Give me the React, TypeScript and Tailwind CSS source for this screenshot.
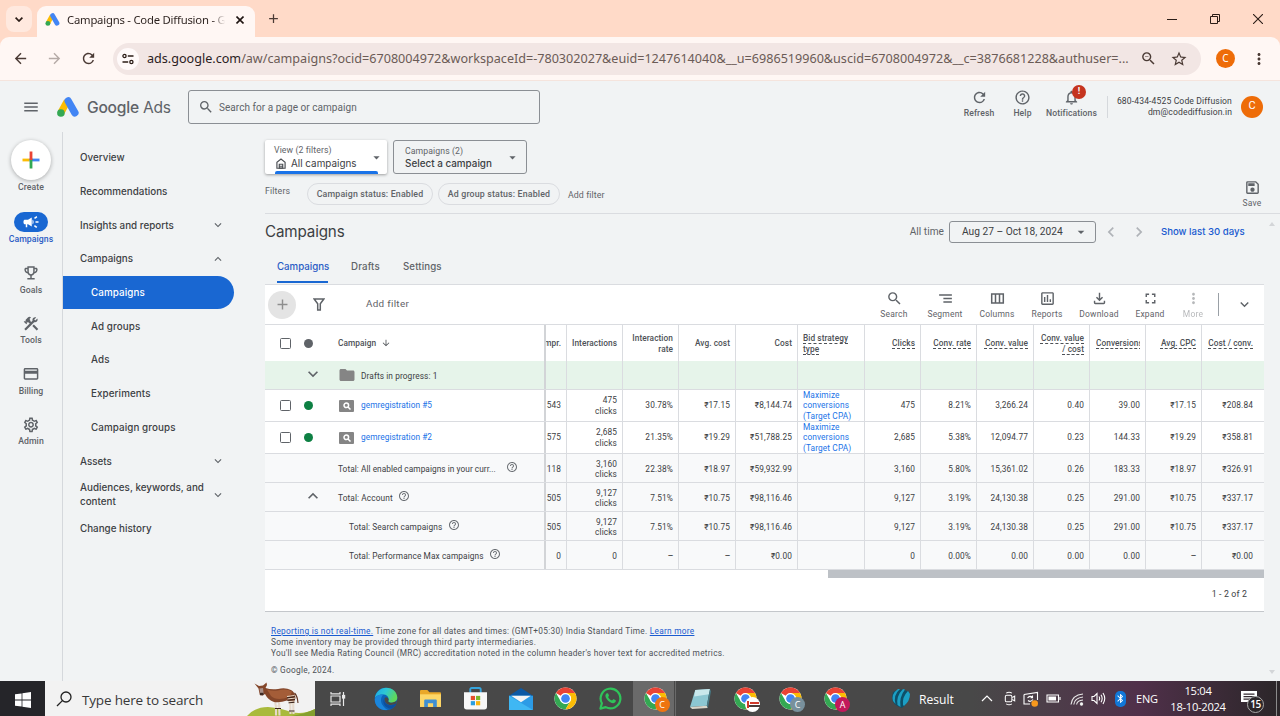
import React from "react";
import {
  MdMenu, MdSearch, MdRefresh, MdHelpOutline, MdNotificationsNone, MdCampaign, MdOutlineEmojiEvents, MdConstruction,
  MdCreditCard, MdOutlineSettings, MdOutlineSave, MdSegment, MdOutlineInsertChart, MdOutlineFileDownload, MdFullscreen,
  MdMoreVert, MdFolder, MdKeyboardArrowDown, MdKeyboardArrowUp, MdStarBorder, MdZoomOut, MdArrowBack,
  MdArrowForward, MdArrowDropDown, MdAdd, MdArrowDownward, MdChevronLeft, MdChevronRight, MdBluetooth,
} from "react-icons/md";

const AdsLogo = ({ className }: { className: string }) => (
  <svg viewBox="0 0 22 20" className={className}>
    <path d="M4 15.5 L10.2 4.2" stroke="#fbbc04" strokeWidth="7" />
    <path d="M11.2 4 L17.9 15.8" stroke="#4285f4" strokeWidth="7.4" strokeLinecap="round" />
    <circle cx="3.9" cy="16" r="3.8" fill="#34a853" />
  </svg>
);

const Chrome = ({ badge, tone }: { badge?: string; tone?: string }) => (
  <div className="relative h-[23px] w-[23px]">
    <svg viewBox="0 0 48 48" className="h-[23px] w-[23px]">
      <circle cx="24" cy="24" r="23" fill="#fff" />
      <path d="M4.1 12.5A23 23 0 0 1 43.9 12.5H24A11.5 11.5 0 0 0 14 18.2z" fill="#ea4335" />
      <path d="M4.1 12.5A23 23 0 0 0 24 47L34 29.8A11.5 11.5 0 0 1 14 29.8z" fill="#34a853" />
      <path d="M43.9 12.5A23 23 0 0 1 24 47L34 29.8A11.5 11.5 0 0 0 34 18.2L24 12.5z" fill="#fbbc05" />
      <circle cx="24" cy="24" r="11.4" fill="#fff" />
      <circle cx="24" cy="24" r="9" fill="#4285f4" />
    </svg>
    {badge !== undefined && (
      <span className={`absolute -right-[3px] -bottom-[2px] flex h-[15px] w-[15px] items-center justify-center rounded-full text-[9px] font-medium text-white ${tone}`}>{badge}</span>
    )}
  </div>
);

const BrowserChrome = () => (
  <div className="shrink-0 bg-[#ffdac8] font-['Noto_Sans','Open_Sans',sans-serif]">
    <div className="flex h-[37px] items-end">
      <div className="mb-[5px] ml-[6px] flex h-[26px] w-[26px] items-center justify-center rounded-[8px] bg-[#ffe9df]">
        <svg viewBox="0 0 8 5" className="h-[5px] w-[8px]" fill="none" stroke="#2b1d17" strokeWidth="1.7"><path d="M.6 .6L4 4L7.4 .6" /></svg>
      </div>
      <div className="ml-[5px] flex h-[31px] w-[218px] items-center rounded-t-[9px] bg-[#fff7f4] pb-[4px]">
        <AdsLogo className="ml-[8px] h-[13px] w-[15px]" />
        <div className="ml-[7px] h-[18px] w-[158px] overflow-hidden whitespace-nowrap bg-linear-to-r from-[#2b211e] from-92% to-transparent bg-clip-text text-[11.3px] leading-[18px] tracking-[-0.22px] text-transparent">Campaigns - Code Diffusion - Google Ads</div>
        <svg viewBox="0 0 8 8" className="ml-[11px] h-[8px] w-[8px]"><path d="M.5 .5L7.5 7.5M7.5 .5L.5 7.5" stroke="#1f1512" strokeWidth="1.6" /></svg>
      </div>
      <MdAdd className="mb-[11px] ml-[11px] h-[15px] w-[15px] text-[#4a3a34]" />
      <div className="mb-[13px] ml-auto flex items-center gap-[33px] pr-[17px] text-[#2b1d17]">
        <svg viewBox="0 0 10 10" className="h-[10px] w-[10px]"><path d="M0 5.5H10" stroke="currentColor" /></svg>
        <svg viewBox="0 0 10 10" className="h-[10px] w-[10px]" fill="none" stroke="currentColor"><path d="M.5 2.5H7.5V9.5H.5zM2.5 2.5V.5H9.5V7.5H7.5" /></svg>
        <svg viewBox="0 0 10 10" className="h-[10px] w-[10px]"><path d="M0 0L10 10M10 0L0 10" stroke="currentColor" strokeWidth="1.1" /></svg>
      </div>
    </div>
    <div className="flex h-[44px] items-center rounded-t-[9px] border-b border-[#f5e4dd] bg-[#fff7f4] text-[#4a3a34]">
      <MdArrowBack className="ml-[12px] h-[17px] w-[17px]" />
      <MdArrowForward className="ml-[17px] h-[17px] w-[17px] text-[#b5aaa6]" />
      <MdRefresh className="ml-[17px] h-[17px] w-[17px]" />
      <div className="ml-[16px] flex h-[32px] w-[1088px] shrink-0 items-center rounded-full bg-[#f2e6e4]">
        <div className="ml-[4px] flex h-[22px] w-[22px] items-center justify-center rounded-full bg-[#fffafa]">
          <svg viewBox="0 0 12 12" className="h-[12px] w-[12px]" fill="none" stroke="#2b1d17" strokeWidth="1.3">
            <circle cx="2.5" cy="3" r="1.6" /><path d="M5.8 3H11.5M.5 9H6.2" /><circle cx="9.4" cy="9" r="1.6" />
          </svg>
        </div>
        <div className="ml-[8px] w-[987px] pt-[2px] text-[12.6px] whitespace-nowrap text-[#6b5b56]"><span className="text-[#2b211e]">ads.google.com</span>/aw/campaigns?ocid=6708004972&amp;workspaceId=-780302027&amp;euid=1247614040&amp;__u=6986519960&amp;uscid=6708004972&amp;__c=3876681228&amp;authuser=...</div>
        <MdZoomOut className="ml-[6px] h-[17px] w-[17px] shrink-0" />
        <MdStarBorder className="ml-[13px] h-[18px] w-[18px] shrink-0" />
      </div>
      <div className="ml-[15px] flex h-[19px] w-[19px] items-center justify-center rounded-full bg-[#ee6c08] text-[10px] text-white">C</div>
      <MdMoreVert className="ml-[15px] h-[18px] w-[18px]" />
    </div>
  </div>
);

const HeaderAction = ({ icon, label, className }: { icon: React.ReactNode; label: string; className: string }) => (
  <div className={`relative flex flex-col items-center text-[#5f6368] ${className}`}>
    {icon}
    <span className="mt-[2px] text-[8.6px] leading-[11px] font-medium tracking-[0.12px]">{label}</span>
  </div>
);

const AdsHeader = () => (
  <div className="flex h-[51px] shrink-0 items-center">
    <MdMenu className="ml-[22px] h-[18px] w-[18px] text-[#5f6368]" />
    <AdsLogo className="ml-[17px] h-[20px] w-[22px]" />
    <div className="ml-[8px] w-[101px] pt-[2px] text-[15.6px] tracking-[-0.24px] whitespace-nowrap text-[#5f6368] font-['Inter',sans-serif]"><span className="font-medium">Google</span> Ads</div>
    <div className="flex h-[34px] w-[352px] items-center rounded-[3px] border border-[#8b8f94]">
      <MdSearch className="ml-[9px] h-[16px] w-[16px] text-[#5f6368]" />
      <span className="ml-[5px] pt-[1px] text-[10px] tracking-[0.05px] text-[#5f6368]">Search for a page or campaign</span>
    </div>
    <div className="ml-auto flex h-full items-start pt-[8px]">
      <HeaderAction icon={<MdRefresh className="h-[17px] w-[17px]" />} label="Refresh" className="w-[44px]" />
      <HeaderAction icon={<MdHelpOutline className="h-[17px] w-[17px]" />} label="Help" className="w-[43px]" />
      <HeaderAction
        icon={<><MdNotificationsNone className="h-[17px] w-[17px]" /><span className="absolute -top-[4px] left-[28px] flex h-[14px] w-[14px] items-center justify-center rounded-full bg-[#c5341f] text-[9px] font-bold text-white">!</span></>}
        label="Notifications" className="w-[55px]" />
    </div>
    <div className="ml-[8px] h-[22px] w-px bg-[#d5d8dc]" />
    <div className="ml-[7px] w-[117px] text-right text-[8.6px] leading-[11px] tracking-[0.12px] whitespace-nowrap text-[#3c4043]">680-434-4525 Code Diffusion<br />dm@codediffusion.in</div>
    <div className="mr-[17px] ml-[9px] flex h-[22px] w-[22px] items-center justify-center rounded-full bg-[#ee6c08] text-[11px] text-white">C</div>
  </div>
);

const railItems = [
  { label: "Goals", Icon: MdOutlineEmojiEvents },
  { label: "Tools", Icon: MdConstruction },
  { label: "Billing", Icon: MdCreditCard },
  { label: "Admin", Icon: MdOutlineSettings },
];

const Rail = () => (
  <div className="flex w-[62px] shrink-0 flex-col items-center pt-[8px] text-[8.7px] leading-[12px] font-medium tracking-[0.06px] text-[#5f6368]">
    <div className="flex h-[40px] w-[40px] items-center justify-center rounded-full bg-white shadow-[0_1px_4px_rgba(0,0,0,0.3)]">
      <svg viewBox="0 0 18 18" className="h-[18px] w-[18px]" strokeWidth="2.8">
        <path d="M.5 9H7.6" stroke="#fbbc04" /><path d="M7.6 9H17.5" stroke="#4285f4" /><path d="M9 7.6V17.5" stroke="#34a853" /><path d="M9 .5V9" stroke="#ea4335" />
      </svg>
    </div>
    <span className="mt-[1px]">Create</span>
    <div className="mt-[19px] flex h-[20px] w-[34px] items-center justify-center rounded-full bg-[#1967d2]">
      <MdCampaign className="h-[18px] w-[18px] text-white" />
    </div>
    <span className="mt-[1px] text-[#2a5bc4]">Campaigns</span>
    {railItems.map(({ label, Icon }) => (
      <div key={label} className="mt-[19px] flex h-[31.6px] flex-col items-center">
        <Icon className="h-[18px] w-[18px]" />
        <span className="mt-[2px]">{label}</span>
      </div>
    ))}
  </div>
);

const navItems: { label: string; chevron?: "up" | "down"; child?: boolean; active?: boolean }[] = [
  { label: "Overview" },
  { label: "Recommendations" },
  { label: "Insights and reports", chevron: "down" },
  { label: "Campaigns", chevron: "up" },
  { label: "Campaigns", child: true, active: true },
  { label: "Ad groups", child: true },
  { label: "Ads", child: true },
  { label: "Experiments", child: true },
  { label: "Campaign groups", child: true },
  { label: "Assets", chevron: "down" },
  { label: "Audiences, keywords, and content", chevron: "down" },
  { label: "Change history" },
];

const SideNav = () => (
  <div className="w-[203px] shrink-0 border-l border-[#d5d8dc] pt-[8.7px]">
    {navItems.map((n, i) => (
      <div key={i} className={`flex h-[33.72px] w-[171px] items-center justify-between pr-[9px] text-[9.8px] leading-[14px] font-medium font-['Inter',sans-serif] ${n.active ? "rounded-r-full bg-[#1967d2] text-white" : "text-[#3c4043]"} ${n.child ? "pl-[28px] tracking-[0.1px]" : "pl-[17px] tracking-[0.02px]"}`}>
        <span className="w-[132px] pt-[1.2px]">{n.label}</span>
        {n.chevron === "down" && <MdKeyboardArrowDown className="h-[14px] w-[14px] shrink-0 text-[#5f6368]" />}
        {n.chevron === "up" && <MdKeyboardArrowUp className="h-[14px] w-[14px] shrink-0 text-[#5f6368]" />}
      </div>
    ))}
  </div>
);

const Tool = ({ icon, label, className }: { icon: React.ReactNode; label: string; className: string }) => (
  <div className={`flex flex-col items-center text-[#5f6368] ${className}`}>
    {icon}
    <span className="mt-[2px] text-[8.5px] leading-[11px] tracking-[0.2px]">{label}</span>
  </div>
);

const Controls = () => (
  <>
    <div className="flex h-[34px] gap-[6px] font-['Inter',sans-serif]">
      <div className="relative flex w-[122px] items-center rounded-[2px] bg-white pl-[9px] shadow-[0_1px_3px_rgba(0,0,0,0.35)]">
        <div className="mt-[1px] flex-1">
          <div className="text-[8.7px] leading-[11px] tracking-[0.1px] text-[#5f6368] font-['Roboto',sans-serif]">View (2 filters)</div>
          <div className="flex items-center gap-[5px] text-[9.9px] leading-[14px] whitespace-nowrap text-[#3c4043]">
            <svg viewBox="0 0 11 12" className="ml-[2px] h-[11px] w-[10px] shrink-0" fill="none" stroke="#4d5156" strokeWidth="1.3"><path d="M1 11.2V4.7L5.5 1L10 4.7V11.2z" /><path d="M3.6 11V6.8H7.4V11zM4 9H7" /></svg>
            All campaigns
          </div>
        </div>
        <MdArrowDropDown className="mr-[3px] h-[15px] w-[15px] text-[#5f6368]" />
        <div className="absolute bottom-0 left-[10px] h-[3px] w-[103px] rounded-t-[2px] bg-[#1a73e8]" />
      </div>
      <div className="flex w-[134px] items-center rounded-[3px] border border-[#8b8f94] pl-[11px]">
        <div className="flex-1 pt-[2px]">
          <div className="text-[8.7px] leading-[11px] tracking-[0.1px] text-[#5f6368] font-['Roboto',sans-serif]">Campaigns (2)</div>
          <div className="text-[9.9px] leading-[13px] font-medium whitespace-nowrap text-[#3c4043]">Select a campaign</div>
        </div>
        <MdArrowDropDown className="mr-[6px] h-[15px] w-[15px] text-[#5f6368]" />
      </div>
    </div>
    <div className="mr-[-16px] flex h-[40px] items-start border-b border-[#dadce0] pt-[9px] text-[8.8px] text-[#5f6368]">
      <span className="w-[42px] pt-[2px] leading-[12px] tracking-[0.15px]">Filters</span>
      <span className="flex h-[22px] w-[126px] items-center justify-center rounded-full border border-[#dadce0] pt-[1px] font-medium tracking-[0.17px]">Campaign status: Enabled</span>
      <span className="ml-[5px] flex h-[22px] w-[122px] items-center justify-center rounded-full border border-[#dadce0] pt-[1px] font-medium tracking-[0.16px]">Ad group status: Enabled</span>
      <span className="ml-[8px] pt-[6px] leading-[12px] tracking-[0.08px]">Add filter</span>
      <Tool icon={<MdOutlineSave className="h-[17px] w-[17px]" />} label="Save" className="-mt-[4px] mr-[16px] ml-auto w-[24px]" />
    </div>
    <div className="flex h-[36px] items-center text-[#3c4043]">
      <h1 className="text-[15.2px] tracking-[-0.15px] font-['Inter',sans-serif]">Campaigns</h1>
      <span className="ml-auto text-[10.1px] tracking-[0.05px] text-[#5f6368]">All time</span>
      <div className="ml-[5px] flex h-[22px] w-[147px] items-center justify-between rounded-[3px] border border-[#8b8f94] pr-[6px] pl-[12px] text-[10.2px] whitespace-nowrap">Aug 27 – Oct 18, 2024<MdArrowDropDown className="h-[16px] w-[16px] text-[#5f6368]" /></div>
      <MdChevronLeft className="ml-[5px] h-[20px] w-[20px] text-[#b0b3b8]" />
      <MdChevronRight className="ml-[8px] h-[20px] w-[20px] text-[#b0b3b8]" />
      <span className="mr-[19px] ml-[12px] w-[84px] text-[9.6px] font-medium whitespace-nowrap text-[#1a5bd0] font-['Inter',sans-serif]">Show last 30 days</span>
    </div>
    <div className="flex h-[35px] items-start border-b border-[#dadce0] pt-[10px] pl-[12px] text-[9.7px] leading-[14px] font-medium text-[#5f6368] font-['Inter',sans-serif]">
      <div className="h-[23px] w-[51px] border-b-2 border-[#1967d2] whitespace-nowrap text-[#2a5bc4]">Campaigns</div>
      <div className="ml-[23px] w-[52px] tracking-[0.15px]">Drafts</div>
      <div className="tracking-[0.1px]">Settings</div>
    </div>
  </>
);

const Toolbar = () => (
  <div className="flex h-[40px] items-center border-b border-[#dadce0] bg-white text-[#5f6368]">
    <div className="ml-[3px] flex h-[28px] w-[28px] items-center justify-center rounded-full bg-[#e4e4e4]"><MdAdd className="h-[17px] w-[17px] text-[#8e8e8e]" /></div>
    <svg viewBox="0 0 12 13" className="ml-[17px] h-[13px] w-[12px]" fill="none" stroke="currentColor" strokeWidth="1.5"><path d="M1.2 1H10.8L7.3 5.8V12H4.7V5.8z" /></svg>
    <span className="ml-[41px] text-[9.9px] tracking-[0.3px]">Add filter</span>
    <div className="ml-auto flex items-start">
      <Tool icon={<MdSearch className="h-[17px] w-[17px]" />} label="Search" className="w-[50px]" />
      <Tool icon={<MdSegment className="h-[17px] w-[17px]" />} label="Segment" className="w-[52px]" />
      <Tool icon={<svg viewBox="0 0 17 17" className="h-[17px] w-[17px]" fill="none" stroke="currentColor" strokeWidth="1.5"><path d="M2.7 4H14.3V13H2.7zM6.5 4V13M10.5 4V13" /></svg>} label="Columns" className="w-[52px]" />
      <Tool icon={<MdOutlineInsertChart className="h-[17px] w-[17px]" />} label="Reports" className="w-[48px]" />
      <Tool icon={<MdOutlineFileDownload className="h-[17px] w-[17px]" />} label="Download" className="w-[56px]" />
      <Tool icon={<MdFullscreen className="h-[17px] w-[17px]" />} label="Expand" className="w-[46px]" />
      <Tool icon={<MdMoreVert className="h-[17px] w-[17px]" />} label="More" className="w-[40px] opacity-45" />
    </div>
    <div className="ml-[5px] h-[23px] w-px bg-[#9aa0a6]" />
    <MdKeyboardArrowDown className="mr-[11px] ml-[17px] h-[17px] w-[17px]" />
  </div>
);

const headers = ["mpr.", "Interactions", "Interaction rate", "Avg. cost", "Cost", "Bid strategy type", "Clicks", "Conv. rate", "Conv. value", "Conv. value\n/ cost", "Conversions", "Avg. CPC", "Cost / conv."];

const rows: { kind: string; height: string; pad: string; cells: string[] }[] = [
  { kind: "drafts", height: "h-[29px] bg-[#e6f4ea]", pad: "pt-[2px]", cells: ["", "", "", "", "", "", "", "", "", "", "", "", ""] },
  { kind: "gemregistration #5", height: "h-[32px] bg-white", pad: "", cells: ["543", "475 clicks", "30.78%", "₹17.15", "₹8,144.74", "Maximize conversions (Target CPA)", "475", "8.21%", "3,266.24", "0.40", "39.00", "₹17.15", "₹208.84"] },
  { kind: "gemregistration #2", height: "h-[32px] bg-white", pad: "", cells: ["575", "2,685 clicks", "21.35%", "₹19.29", "₹51,788.25", "Maximize conversions (Target CPA)", "2,685", "5.38%", "12,094.77", "0.23", "144.33", "₹19.29", "₹358.81"] },
  { kind: "enabled", height: "h-[29px] bg-[#f8f9fa]", pad: "pt-[2px]", cells: ["118", "3,160 clicks", "22.38%", "₹18.97", "₹59,932.99", "", "3,160", "5.80%", "15,361.02", "0.26", "183.33", "₹18.97", "₹326.91"] },
  { kind: "account", height: "h-[29px] bg-[#f8f9fa]", pad: "pt-[2px]", cells: ["505", "9,127 clicks", "7.51%", "₹10.75", "₹98,116.46", "", "9,127", "3.19%", "24,130.38", "0.25", "291.00", "₹10.75", "₹337.17"] },
  { kind: "search", height: "h-[29px] bg-[#f8f9fa]", pad: "pt-[2px]", cells: ["505", "9,127 clicks", "7.51%", "₹10.75", "₹98,116.46", "", "9,127", "3.19%", "24,130.38", "0.25", "291.00", "₹10.75", "₹337.17"] },
  { kind: "pmax", height: "h-[29px] bg-[#f8f9fa]", pad: "pt-[2px]", cells: ["0", "0", "—", "—", "₹0.00", "", "0", "0.00%", "0.00", "0.00", "0.00", "—", "₹0.00"] },
];

const gridCols = "grid grid-cols-[281px_21px_56px_56px_57px_62px_67px_56px_56px_57px_56px_56px_56px_62px]";

const cellPad = (i: number) =>
  i === 12 ? "justify-end pr-[11px] text-right" : i === 5 ? "justify-start pl-[5px] border-r border-[#dadce0]" : "justify-end pr-[5px] text-right border-r border-[#dadce0]";

const Box = () => <div className="h-[11px] w-[11px] rounded-[1.5px] border border-[#5f6368]" />;
const Help = ({ className }: { className: string }) => <MdHelpOutline className={`mb-[4px] h-[12px] w-[12px] text-[#6b6f74] ${className}`} />;

const NameCell = ({ kind, pad }: { kind: string; pad: string }) => {
  const base = `flex items-center border-r-2 border-[#d2d4d7] whitespace-nowrap tracking-[0.1px] ${pad}`;
  if (kind === "drafts")
    return <div className={base}><MdKeyboardArrowDown className="mb-[4px] ml-[38px] h-[20px] w-[20px] text-[#5f6368]" /><MdFolder className="mb-[2px] ml-[15px] h-[18px] w-[18px] text-[#858585]" /><span className="ml-[5px]">Drafts in progress: 1</span></div>;
  if (kind === "enabled")
    return <div className={base}><span className="ml-[73px] w-[162px] tracking-[0.05px]">Total: All enabled campaigns in your curr...</span><Help className="ml-[6px]" /></div>;
  if (kind === "account")
    return <div className={base}><MdKeyboardArrowUp className="mb-[4px] ml-[38px] h-[20px] w-[20px] text-[#5f6368]" /><span className="ml-[15px]">Total: Account</span><Help className="ml-[5px]" /></div>;
  if (kind === "search")
    return <div className={base}><span className="ml-[84px]">Total: Search campaigns</span><Help className="ml-[6px]" /></div>;
  if (kind === "pmax")
    return <div className={base}><span className="ml-[84px]">Total: Performance Max campaigns</span><Help className="ml-[5px]" /></div>;
  return (
    <div className={base}>
      <div className="ml-[15px]"><Box /></div>
      <div className="ml-[13px] h-[9px] w-[9px] rounded-full bg-[#0d8043]" />
      <div className="ml-[26px] flex h-[12px] w-[15px] items-center justify-center rounded-[1px] bg-[#858585]">
        <svg viewBox="0 0 8 8" className="h-[8px] w-[8px]" fill="none" stroke="#fff" strokeWidth="1.5"><circle cx="3.3" cy="3.3" r="2.3" /><path d="M5 5L7.5 7.5" /></svg>
      </div>
      <span className="ml-[7px] text-[8.3px] tracking-[0.05px] text-[#1a73e8]">{kind}</span>
    </div>
  );
};

const Table = () => (
  <div className="bg-white text-[8.3px] leading-[10.3px] tracking-[0.12px] text-[#3c4043]">
    <div className={`${gridCols} h-[36px] font-medium tracking-[0.06px] text-[#4d5156]`}>
      <div className="flex items-center border-r-2 border-[#d2d4d7]">
        <div className="ml-[15px]"><Box /></div>
        <div className="ml-[13px] h-[9px] w-[9px] rounded-full bg-[#5f6368]" />
        <span className="ml-[25px] pt-[1px]">Campaign</span>
        <MdArrowDownward className="ml-[5px] h-[10px] w-[10px]" />
      </div>
      {headers.map((h, i) => (
        <div key={h} className={`flex items-center ${i === 0 ? "overflow-hidden" : ""} ${cellPad(i)}`}>
          <span className={`${i >= 5 ? "pt-[3px] pb-[2px] underline decoration-dashed decoration-1 underline-offset-2" : "pt-[1px]"} ${h === "Conversions" ? "w-[44px] overflow-hidden text-left" : ""} ${i === 2 || i === 5 ? "" : "whitespace-pre"}`}>{h}</span>
        </div>
      ))}
    </div>
    {rows.map((r) => (
      <div key={r.kind} className={`${gridCols} border-b border-[#dadce0] ${r.height}`}>
        <NameCell kind={r.kind} pad={r.pad} />
        {r.cells.map((c, i) => (
          <div key={i} className={`flex items-center ${r.pad} ${cellPad(i)} ${i === 5 ? "text-[#1a73e8]" : ""}`}>
            <span className={i === 1 ? "w-[24px]" : i === 5 ? "w-[56px]" : c === "—" ? "text-[6.5px] font-bold" : "whitespace-nowrap"}>{c}</span>
          </div>
        ))}
      </div>
    ))}
    <div className="flex h-[8px] justify-end"><div className="w-[436px] bg-[#bdc1c6]" /></div>
    <div className="flex h-[34px] items-center justify-end border-b border-[#c4c7cb] pr-[17px] text-[8.8px]">1 - 2 of 2</div>
  </div>
);

const Footnotes = () => (
  <div className="pt-[14px] pl-[6px] text-[8.3px] leading-[11.1px] tracking-[0.27px] text-[#4d5156]">
    <p><a className="text-[#1a5bd0] underline">Reporting is not real-time.</a> Time zone for all dates and times: (GMT+05:30) India Standard Time. <a className="text-[#1a5bd0] underline">Learn more</a></p>
    <p>Some inventory may be provided through third party intermediaries.</p>
    <p>You'll see Media Rating Council (MRC) accreditation noted in the column header's hover text for accredited metrics.</p>
    <p className="mt-[6px]">© Google, 2024.</p>
  </div>
);

const App45 = ({ children }: { children: React.ReactNode }) => <div className="flex w-[45px] shrink-0 items-center justify-center">{children}</div>;

const Okapi = () => (
  <svg viewBox="0 0 68 35" className="h-[35px] w-[68px]">
    <path d="M0 35Q8 26 21 26Q34 27 44 31Q56 34 68 28V35z" fill="#a9ba3c" />
    <path d="M44 35Q58 33 68 28V35z" fill="#84a02e" />
    <path d="M28 20L29 26V34.5M32 20L32.5 34.5M43 18L43.5 33M46 17L46.5 33" fill="none" stroke="#e6d9cc" strokeWidth="2.1" />
    <path d="M7.5 2.5L12 5L16 4.5L19.5 1.5L20 4L18.5 7Q24 9 31 8Q38 6 44 9Q48 11 48.5 17L47 21L40 19.5Q33 22 27 21Q21 19 18 13L15.5 14.5L12.8 14L11.5 7.5z" fill="#84462a" />
    <path d="M20 8.5Q25 10.5 31 9.5Q39 7 45 10.5Q44 16 37 17.5Q28 19 24 15z" fill="#a45d38" />
    <path d="M12.5 7.5L16 7L16.7 13.8L13.2 13.5z" fill="#a9918a" />
    <path d="M13 11.8H16.5V14.2H13z" fill="#3d2a24" />
    <path d="M40 15.5L47.5 14.5M40.5 18L48 17M41 20.5L47.5 20M42 23L47.5 22.5M28 25H33.5" stroke="#e9dccb" strokeWidth="1" />
    <path d="M40 16.8L47.8 15.8M40.5 19.3L48 18.6M41.5 21.8L47.5 21.3M28 27.5H34M42 30H47.5" stroke="#39221a" strokeWidth="1" />
    <path d="M47.5 12Q50.5 15 51 22" fill="none" stroke="#5d301d" strokeWidth="1.1" />
  </svg>
);

const Taskbar = () => (
  <div className="flex h-[35px] shrink-0 items-stretch bg-linear-to-r from-[#484848] from-76% via-[#50304a] via-89% to-[#2b2629] text-white font-['Open_Sans','Noto_Sans',sans-serif]">
    <div className="flex w-[45px] items-center justify-center bg-[#252529] pt-[2px]">
      <svg viewBox="0 0 16 16" className="h-[16px] w-[16px]" fill="#fff"><path d="M0 2.3L6.6 1.4V7.6H0zM7.4 1.3L16 0V7.6H7.4zM0 8.4H6.6V14.6L0 13.7zM7.4 8.4H16V16L7.4 14.7z" /></svg>
    </div>
    <div className="flex w-[270px] items-center bg-[#f2f2f2] text-[#383838]">
      <svg viewBox="0 0 16 16" className="ml-[11px] h-[16px] w-[16px]" fill="none" stroke="#222" strokeWidth="1.3"><circle cx="10" cy="6" r="5" /><path d="M6.4 9.6L1 15" /></svg>
      <span className="ml-[10px] w-[165px] pt-[4px] text-[13.5px] tracking-[-0.17px] whitespace-nowrap">Type here to search</span>
      <Okapi />
    </div>
    <App45>
      <svg viewBox="0 0 16 16" className="h-[16px] w-[16px]" fill="none" stroke="#e8e8e8" strokeWidth="1.2"><path d="M1 5H10V11H1zM1 1V2.8H10V1M1 15V13.2H10V15M13.5 1V15" /><rect x="12.6" y="4.5" width="2" height="2.5" fill="#fff" /></svg>
    </App45>
    <div className="w-[3px]" />
    <App45>
      <svg viewBox="0 0 24 24" className="h-[24px] w-[24px]">
        <defs><linearGradient id="edgeTop" x1="0" x2="1" y1="0" y2=".4"><stop offset="0" stopColor="#1ba5e8" /><stop offset=".5" stopColor="#2dc7d5" /><stop offset="1" stopColor="#5fd85a" /></linearGradient></defs>
        <circle cx="12" cy="12" r="11.3" fill="#0c63b8" />
        <path d="M.8 11.5C1.5 5 6.5.7 12 .7C19 .7 23.3 5.6 23.3 10.4C23.3 13.8 20.5 15.8 17.6 15.8C14.8 15.8 13.8 14.8 14.3 13.8C15.2 12.2 14.5 8 9.8 7.6C5 7.4 1.5 9.5.8 11.5z" fill="url(#edgeTop)" />
        <path d="M.8 12C2 8.2 6 7.2 9.5 7.7C6.5 9.5 6.2 14.5 8.5 18C10 20.5 12.5 22.5 13.8 23C6 24 .3 18.5.8 12z" fill="#1b86dc" />
        <path d="M10.4 11C9.3 15 12.5 18.6 18 18.3L22.5 16.5C21.5 18.8 19.5 20.8 17.5 21.8C11 21.5 7.5 15.5 10.4 11z" fill="#0d4f9e" />
        <path d="M10.7 11C11.8 9.7 14 10.5 14.6 12.3L14.3 14.2C15 16.2 19.5 16.4 22.8 13.6L22.4 16.3C18 19.5 9.5 18.5 10.7 11z" fill="#484848" />
      </svg>
    </App45>
    <App45>
      <svg viewBox="0 0 20 20" className="h-[21px] w-[21px]"><path d="M0 3Q0 2 1 2H7L9 4H19Q20 4 20 5V18H0z" fill="#e9a829" /><path d="M0 6H20V18H0z" fill="#fcd667" /><path d="M4 18V12Q4 11 5 11H15Q16 11 16 12V18H12.5V14.5H7.5V18z" fill="#3f8fd2" /></svg>
    </App45>
    <App45>
      <svg viewBox="0 0 22 22" className="h-[23px] w-[23px]"><path d="M6 6V2.5Q6 1 7.5 1H14.5Q16 1 16 2.5V6" fill="none" stroke="#36a5dd" strokeWidth="1.8" /><path d="M0 5H22V19Q22 21.5 19.5 21.5H2.5Q0 21.5 0 19z" fill="#f7f7f7" /><path d="M6.5 8.5H10.5V12.5H6.5z" fill="#e5502c" /><path d="M11.5 8.5H15.5V12.5H11.5z" fill="#7db82b" /><path d="M6.5 13.5H10.5V17.5H6.5z" fill="#2a9fe0" /><path d="M11.5 13.5H15.5V17.5H11.5z" fill="#f7b512" /></svg>
    </App45>
    <App45>
      <svg viewBox="0 0 22 20" className="h-[22px] w-[24px]"><path d="M0 7L11 0L22 7V10H0z" fill="#0c59a4" /><path d="M0 7H22V20H0z" fill="#2c9be6" /><path d="M0 7L22 20H0z" fill="#3fb7f3" /><path d="M2 7H20L11 13z" fill="#f4f4f4" /></svg>
    </App45>
    <App45><Chrome /></App45>
    <App45>
      <svg viewBox="0 0 24 24" className="h-[23px] w-[23px]"><path d="M1.5 22.5L3 17A10.3 10.3 0 1 1 7 21z" fill="none" stroke="#2fc45a" strokeWidth="2.3" strokeLinejoin="round" /><path d="M8.4 6.5C9.2 6.2 9.6 6.6 9.9 7.5L10.4 8.9C10.5 9.4 9.8 10.2 9.5 10.5C10.4 12.3 11.9 13.5 13.6 14.2L14.9 12.8C15.4 12.6 17 13.5 17.5 13.8C18 15.4 16.2 17 14.7 17C11 16.6 6.8 12.3 6.7 9.2C6.7 8 7.4 6.8 8.4 6.5z" fill="#2fc45a" /></svg>
    </App45>
    <div className="flex w-[41px] shrink-0 items-center justify-center bg-[#6a6a6a] pl-[3px]"><Chrome badge="C" tone="bg-[#ee7410]" /></div>
    <div className="mr-[2px] w-[2px] border-r border-[#6a6a6a]" />
    <App45>
      <svg viewBox="0 0 20 20" className="h-[21px] w-[21px]"><path d="M5 2L19 1L16 17L0 18z" fill="#8cc7d2" /><path d="M5 2L19 1L18 6L4 8z" fill="#c9e8ec" /><path d="M0 18L16 17L17 19L2 20z" fill="#d9d5c9" /><path d="M19 1L20 3L17 19L16 17z" fill="#477985" /></svg>
    </App45>
    <App45><div className="relative"><Chrome badge="" tone="bg-white" /><span className="absolute right-[-2px] bottom-[6px] h-[2px] w-[9px] bg-[#d0392b]" /><span className="absolute right-[-3px] bottom-[3px] h-[2px] w-[12px] bg-[#4a3a3a]" /><span className="absolute right-[8px] bottom-[2px] h-[7px] w-[2px] bg-[#d0392b]" /></div></App45>
    <App45><Chrome badge="C" tone="bg-[#78909c]" /></App45>
    <App45><Chrome badge="A" tone="bg-[#c2185b]" /></App45>
    <div className="ml-[33px] flex items-center">
      <svg viewBox="0 0 20 21" className="h-[21px] w-[20px]" fill="none"><path d="M2 4Q10 -1 18 4Q20 12 11 20Q1 17 1 9z" fill="#0d4f68" /><path d="M2 13Q0 6 7 1L9 1Q2 7 4.500 16zM6.500 17Q5 8 12 1L14 1.500Q8 9 9.500 19zM12 17Q11 9 17 3L19 6Q19 13 13 18z" fill="#1c9fc4" /></svg>
      <span className="ml-[8px] w-[46px] pt-[3px] text-[12.1px] text-white">Result</span>
    </div>
    <div className="ml-auto flex items-center gap-[7px] pr-[7px]">
      <svg viewBox="0 0 12 7" className="mr-[4px] h-[7px] w-[12px]" fill="none" stroke="#fff" strokeWidth="1.2"><path d="M1 6L6 1L11 6" /></svg>
      <svg viewBox="0 0 12 16" className="h-[15px] w-[12px]" fill="none" stroke="#fff" strokeWidth="1.1"><rect x="1" y="4.5" width="7" height="7" rx="1.5" /><path d="M8.5 7L11 5.5V10.5L8.5 9M2 2.3Q5 .3 8 2.3M2 13.7Q5 15.7 8 13.7" /></svg>
      <svg viewBox="0 0 16 16" className="h-[16px] w-[16px]" fill="none" stroke="#fff" strokeWidth="1.1"><path d="M1 3.5L14.5 1.5V9M1 3.5V13H7M4.5 7Q7 4 9.5 6.5M9.5 4.5V6.8H7.5M10 8.5Q7.5 11.5 5 9.5" /><circle cx="11.7" cy="12.5" r="3.3" fill="#f7981d" stroke="none" /></svg>
      <svg viewBox="0 0 15 9" className="h-[9px] w-[15px]" fill="none" stroke="#fff" strokeWidth="1.1"><path d="M1 1H12.5V8H1zM14 3V6" /><path d="M3 3H9.5V6H3z" fill="#fff" /></svg>
      <svg viewBox="0 0 14 14" className="ml-[2px] h-[14px] w-[14px]" fill="none" stroke="#e8e8e8" strokeWidth="1.1"><path d="M1 12.5Q2 3 13 2M3.8 12.5Q4.5 6 13 5M6.6 12.5Q7 8.5 13 8" /><circle cx="11.5" cy="12" r="1.2" fill="#fff" /></svg>
      <svg viewBox="0 0 15 13" className="h-[13px] w-[15px]" fill="none" stroke="#fff" strokeWidth="1.1"><path d="M1 4.5H3L6 1.5V11.5L3 8.5H1zM8 4.5Q9.3 6.5 8 8.5M10 2.8Q12.3 6.5 10 10.2M12 1Q15.5 6.5 12 12" /></svg>
      <div className="ml-[2px] flex h-[16px] w-[11px] items-center justify-center rounded-[5px] bg-[#1177d8]"><MdBluetooth className="h-[13px] w-[13px]" /></div>
      <span className="ml-[3px] w-[24px] pt-[1px] text-[11px] tracking-[-0.2px]">ENG</span>
      <div className="ml-[3px] w-[56px] text-center text-[11.2px] leading-[16px] tracking-[-0.3px] whitespace-nowrap">15:04<br />18-10-2024</div>
      <div className="relative ml-[8px] w-[28px]">
        <svg viewBox="0 0 16 15" className="h-[15px] w-[16px]" fill="#fff"><path d="M0 0H16V11H12V14L9 11H0zM2.5 2.5V3.8H13.5V2.5zM2.5 5V6.3H13.5V5zM2.5 7.5V8.8H10V7.5z" fillRule="evenodd" /></svg>
        <span className="absolute top-[5px] left-[6px] flex h-[17px] w-[17px] items-center justify-center rounded-full border border-[#a9a9a9] bg-[#2b2629] text-[10px] font-semibold tracking-[-0.5px]">15</span>
      </div>
    </div>
    <div className="mr-[3px] w-px bg-[#8b8b8b]" />
  </div>
);

export default function App() {
  return (
    <div className="flex h-[716px] w-[1280px] flex-col overflow-hidden bg-[#f1f3f4] font-['Roboto',sans-serif]">
      <BrowserChrome />
      <AdsHeader />
      <div className="flex min-h-0 flex-1">
        <Rail />
        <SideNav />
        <main className="w-[999px] pt-[8px]">
          <Controls />
          <Toolbar />
          <Table />
          <Footnotes />
        </main>
        <div className="flex w-[16px] flex-col items-center justify-between pt-[90px] pb-[7px]">
          <svg viewBox="0 0 6 4" className="h-[4px] w-[6px]" fill="#d3d5d8"><path d="M0 4L3 0L6 4z" /></svg>
          <svg viewBox="0 0 6 4" className="h-[4px] w-[6px]" fill="#d3d5d8"><path d="M0 0L3 4L6 0z" /></svg>
        </div>
      </div>
      <Taskbar />
    </div>
  );
}
